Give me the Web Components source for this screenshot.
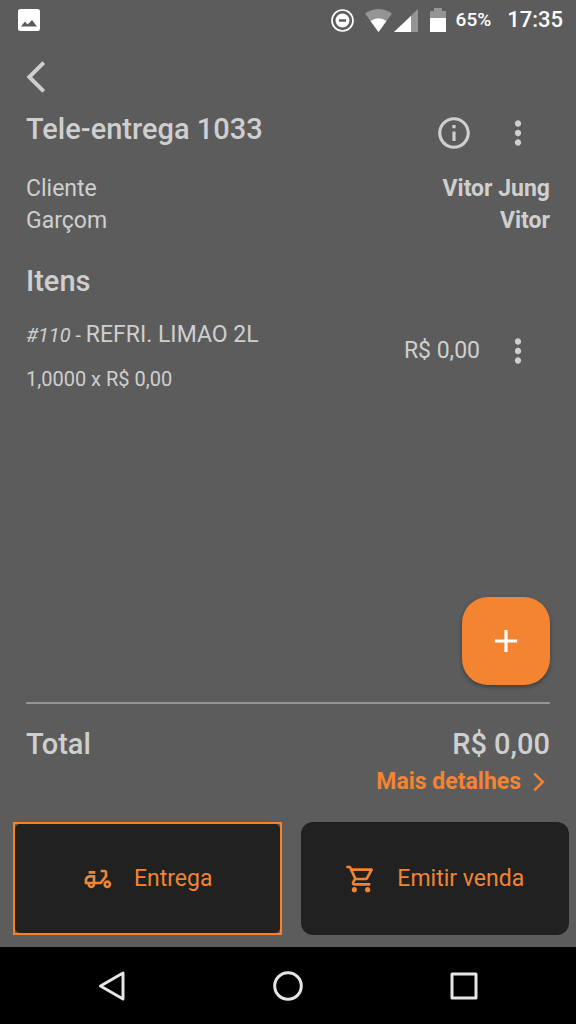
<!DOCTYPE html>
<html lang="pt-BR">
<head>
<meta charset="utf-8">
<meta name="viewport" content="width=device-width, initial-scale=1">
<title>Tele-entrega 1033</title>
<style>
  body { margin: 0; background: #5c5c5c; color: #cfcfcf; font: 23px/32px Roboto, sans-serif; }
</style>
</head>
<body>
<order-screen></order-screen>
<script>
const define = (name, html) => customElements.define(name, class extends HTMLElement {
  constructor() {
    super();
    const t = document.createElement('template');
    t.innerHTML = html;
    this.attachShadow({ mode: 'open' }).append(t.content.cloneNode(true));
  }
});

const paths = {
  back: 'M17.77 3.77L16 2 6 12l10 10 1.77-1.77L9.54 12z',
  info: 'M11 7h2v2h-2zm0 4h2v6h-2zm1-9C6.48 2 2 6.48 2 12s4.48 10 10 10 10-4.48 10-10S17.52 2 12 2zm0 18c-4.41 0-8-3.59-8-8s3.59-8 8-8 8 3.59 8 8-3.59 8-8 8z',
  more: 'M12 8c1.1 0 2-.9 2-2s-.9-2-2-2-2 .9-2 2 .9 2 2 2zm0 2c-1.1 0-2 .9-2 2s.9 2 2 2 2-.9 2-2-.9-2-2-2zm0 6c-1.1 0-2 .9-2 2s.9 2 2 2 2-.9 2-2-.9-2-2-2z',
  add: 'M19 13h-6v6h-2v-6H5v-2h6V5h2v6h6z',
  moped: 'M19 7c0-1.1-.9-2-2-2h-3v2h3v2.65L13.52 14H10V9H6c-2.21 0-4 1.79-4 4v3h2c0 1.66 1.34 3 3 3s3-1.34 3-3h4.48L19 10.35V7zM4 14v-1c0-1.1.9-2 2-2h2v3H4zm3 3c-.55 0-1-.45-1-1h2c0 .55-.45 1-1 1zM5 6h5v2H5zM19 13c-1.66 0-3 1.34-3 3s1.34 3 3 3 3-1.34 3-3-1.34-3-3-3zm0 4c-.55 0-1-.45-1-1s.45-1 1-1 1 .45 1 1-.45 1-1 1z',
  cart: 'M15.55 13c.75 0 1.41-.41 1.75-1.03l3.58-6.49c.37-.66-.11-1.48-.87-1.48H5.21l-.94-2H1v2h2l3.6 7.59-1.35 2.44C4.52 15.37 5.48 17 7 17h12v-2H7l1.1-2h7.45zM6.16 6h12.15l-2.76 5H8.53L6.16 6zM7 18c-1.1 0-1.99.9-1.99 2S5.9 22 7 22s2-.9 2-2-.9-2-2-2zm10 0c-1.1 0-1.99.9-1.99 2s.89 2 1.99 2 2-.9 2-2-.9-2-2-2z',
  forward: 'M7.2 5.6L8.8 4l8 8-8 8-1.6-1.6 6.4-6.4z'
};
customElements.define('app-icon', class extends HTMLElement {
  constructor() {
    super();
    this.attachShadow({ mode: 'open' }).innerHTML = `
      <style>:host{display:block;flex:none;width:var(--icon,38px);height:var(--icon,38px)} svg{display:block;width:100%;height:100%;fill:currentColor}</style>
      <svg viewBox="0 0 24 24" aria-hidden="true"><path d="${paths[this.getAttribute('name')]}"/></svg>`;
  }
});

customElements.define('icon-button', class extends HTMLElement {
  constructor() {
    super();
    this.attachShadow({ mode: 'open' }).innerHTML = `
      <style>
        :host{display:block;flex:none}
        button{display:grid;place-items:center;width:64px;height:48px;margin:0;padding:0;border:0;background:none;color:inherit}
      </style>
      <button type="button" aria-label="${this.getAttribute('label')}"><slot></slot></button>`;
  }
});

define('status-bar', `
  <style>
    :host{display:flex;align-items:center;height:40px;padding:0 13px 0 18px;color:#fff;font-weight:500}
    svg{display:block;flex:none}
    .image{margin-right:auto}
    .dnd{margin-right:11px} .wifi{margin-right:2px} .signal{margin-right:12px} .battery{margin-right:10px}
    .level{font-size:19px;margin-right:16px}
    time{font-size:22px}
  </style>
  <svg class="image" width="22" height="22" viewBox="0 0 22 22"><path fill="#fff" fill-rule="evenodd" d="M2.5 0h17a2.5 2.5 0 0 1 2.5 2.5v17a2.5 2.5 0 0 1-2.5 2.5h-17a2.5 2.5 0 0 1-2.5-2.5v-17A2.5 2.5 0 0 1 2.5 0zM3 17.5h16l-5-6.5-4.5 4.5-2.500-3z"/></svg>
  <svg class="dnd" width="23" height="23" viewBox="0 0 23 23"><circle cx="11.5" cy="11.5" r="10.5" fill="none" stroke="#fff" stroke-width="1.7"/><path fill="#fff" fill-rule="evenodd" d="M11.5 4.5a7 7 0 1 1 0 14 7 7 0 0 1 0-14zM8 10.3h7v2.4H8z"/></svg>
  <svg class="wifi" width="27" height="23" viewBox="0 0 27 23"><path fill="#fff" opacity=".35" d="M0 4.5Q13.5-4.500 27 4.5L13.5 23z"/><path fill="#fff" d="M5.5 12Q13.5 6.5 21.5 12L13.5 23z"/></svg>
  <svg class="signal" width="24" height="23" viewBox="0 0 24 23"><path fill="#fff" opacity=".35" d="M24 0v23H0z"/><path fill="#fff" d="M17 7v16H0z"/></svg>
  <svg class="battery" width="16" height="24" viewBox="0 0 16 24"><path fill="#fff" opacity=".35" d="M0 3h4V0h8v3h4v7H0z"/><path fill="#fff" d="M0 10h16v14H0z"/></svg>
  <span class="level">65%</span><time>17:35</time>`);

define('order-header', `
  <style>
    :host{display:block}
    nav{padding:13px 0 8px 4px}
    .row{display:flex;padding:0 26px}
    h1{flex:1;margin:0;font-size:29px;line-height:40px;font-weight:500}
  </style>
  <nav><icon-button label="Voltar"><app-icon name="back"></app-icon></icon-button></nav>
  <div class="row">
    <h1><slot></slot></h1>
    <icon-button label="Informações"><app-icon name="info"></app-icon></icon-button>
    <icon-button label="Opções"><app-icon name="more"></app-icon></icon-button>
  </div>`);

define('order-people', `
  <style>
    :host{display:block}
    dl{margin:16px 26px 0;display:grid;grid-template-columns:auto 1fr}
    dd{margin:0;text-align:right;font-weight:700}
  </style>
  <dl><dt>Cliente</dt><dd>Vitor Jung</dd><dt>Garçom</dt><dd>Vitor</dd></dl>`);

define('order-item', `
  <style>
    :host{display:flex;align-items:flex-start;padding:0 26px}
    .info{flex:1}
    .name,.qty{margin:0}
    .qty{font-size:20px;line-height:24px;margin-top:16px}
    .side{display:flex;align-items:center;gap:6px;height:64px}
    ::slotted(em){font-size:20px}
  </style>
  <div class="info"><p class="name"><slot></slot></p><p class="qty"><slot name="qty"></slot></p></div>
  <div class="side">
    <span><slot name="price"></slot></span>
    <icon-button label="Opções do item"><app-icon name="more"></app-icon></icon-button>
  </div>`);

define('add-button', `
  <style>
    :host{display:block;align-self:flex-end;margin:0 26px 17px}
    button{display:grid;place-items:center;width:88px;height:88px;padding:0;border:0;border-radius:26px;background:#f28432;color:#fff;box-shadow:0 2px 4px rgba(0,0,0,.35)}
  </style>
  <button type="button" aria-label="Adicionar item"><app-icon name="add"></app-icon></button>`);

define('order-total', `
  <style>
    :host{display:block;margin:0 26px;padding-top:20px;border-top:2px solid #959595}
    .sum{display:flex;justify-content:space-between;font-size:29px;line-height:40px;font-weight:500}
    a{display:flex;justify-content:flex-end;align-items:center;gap:4px;margin-top:2px;color:#f28432;font-weight:700;text-decoration:none;--icon:28px}
    app-icon{margin-right:-3px}
  </style>
  <div class="sum"><span>Total</span><span>R$ 0,00</span></div>
  <a href="#detalhes">Mais detalhes<app-icon name="forward"></app-icon></a>`);

define('action-button', `
  <style>
    :host{display:block;flex:1 1 0;--icon:32px}
    button{display:block;width:100%;height:113px;margin:0;padding:0;border:0;background:none;color:#f28432;font:inherit}
    .face{display:flex;align-items:center;justify-content:center;gap:20px;height:100%;border-radius:12px;background:#212121}
    :host([selected]) button{border:2px solid #fb8128}
    :host([selected]) .face{border-radius:5px}
  </style>
  <button type="button"><span class="face"><slot name="icon"></slot><slot></slot></span></button>`);

define('system-nav', `
  <style>
    :host{display:grid;grid-template-columns:repeat(3,1fr);height:77px;padding:0 24px;background:#000}
    button{display:grid;place-items:center;border:0;padding:0;background:none}
    svg{display:block;fill:none;stroke:#e6e6e6;stroke-width:3;stroke-linejoin:round}
  </style>
  <button type="button" aria-label="Voltar"><svg width="32" height="32"><path d="M4.5 16L27 3v26z"/></svg></button>
  <button type="button" aria-label="Início"><svg width="32" height="32"><circle cx="16" cy="16" r="13.3"/></svg></button>
  <button type="button" aria-label="Recentes"><svg width="32" height="32"><path d="M4 4h24v24H4z"/></svg></button>`);

define('order-screen', `
  <style>
    :host{display:flex;flex-direction:column;min-height:100vh}
    main{flex:1;display:flex;flex-direction:column}
    h2{margin:24px 26px 18px;font-size:29px;line-height:40px;font-weight:500}
    .items{flex:1}
    .actions{display:flex;gap:19px;padding:24px 7px 12px 13px}
  </style>
  <status-bar></status-bar>
  <order-header>Tele-entrega 1033</order-header>
  <main>
    <order-people></order-people>
    <h2>Itens</h2>
    <div class="items">
      <order-item><em>#110 - </em>REFRI. LIMAO 2L<span slot="qty">1,0000 x R$ 0,00</span><span slot="price">R$ 0,00</span></order-item>
    </div>
    <add-button></add-button>
    <order-total></order-total>
    <div class="actions">
      <action-button selected><app-icon slot="icon" name="moped"></app-icon>Entrega</action-button>
      <action-button><app-icon slot="icon" name="cart"></app-icon>Emitir venda</action-button>
    </div>
  </main>
  <system-nav></system-nav>`);
</script>
</body>
</html>
